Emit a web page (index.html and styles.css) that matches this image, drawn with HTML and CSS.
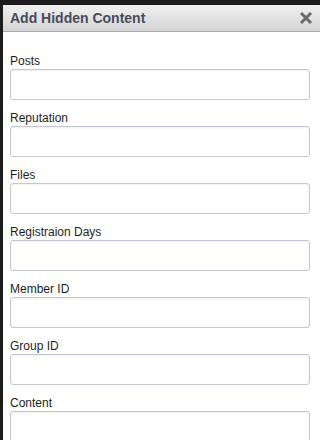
FILE: index.html
```html
<!DOCTYPE html>
<html lang="en">
<head>
    <meta charset="UTF-8">
    <title>Add Hidden Content</title>
    <link rel="stylesheet" href="styles.css">
</head>
<body>
    <div class="dialog">
        <div class="dialog-head">
            <h2>Add Hidden Content</h2>
            <svg class="close" width="12" height="12" viewBox="0 0 12 12">
                <path d="M2 2 L10 10 M10 2 L2 10" stroke="#6b6b6b" stroke-width="3" stroke-linecap="square"/>
            </svg>
        </div>
        <div class="dialog-body">
            <div class="field">
                <label for="posts">Posts</label>
                <input id="posts" type="text">
            </div>
            <div class="field">
                <label for="rep">Reputation</label>
                <input id="rep" type="text">
            </div>
            <div class="field">
                <label for="files">Files</label>
                <input id="files" type="text">
            </div>
            <div class="field">
                <label for="days">Registraion Days</label>
                <input id="days" type="text">
            </div>
            <div class="field">
                <label for="member">Member ID</label>
                <input id="member" type="text">
            </div>
            <div class="field">
                <label for="group">Group ID</label>
                <input id="group" type="text">
            </div>
            <div class="field">
                <label for="content">Content</label>
                <textarea id="content"></textarea>
            </div>
        </div>
    </div>
</body>
</html>
```

FILE: styles.css
```css
html, body {
    margin: 0;
    padding: 0;
    height: 100%;
    overflow: hidden;
}

body {
    background-color: #1c1c1c;
    font-family: 'Liberation Sans', Arial, sans-serif;
    padding: 5px 0 0 3px;
    box-sizing: border-box;
}

.dialog {
    background-color: #fff;
    width: 317px;
    height: 100%;
    overflow: hidden;
}

.dialog-head {
    display: flex;
    justify-content: space-between;
    align-items: center;
    height: 26px;
    padding: 0 8px 0 7px;
    background: linear-gradient(#f0f0f0, #d5d5d5);
    border-bottom: 1px solid #a9ada9;
}

.dialog-head h2 {
    margin: 0;
    font-size: 14px;
    font-weight: bold;
    color: #474c5b;
}

.close {
    display: block;
}

.dialog-body {
    padding: 22px 7px 0 7px;
}

.field {
    display: flex;
    flex-direction: column;
    margin-bottom: 11px;
}

.field label {
    font-size: 12px;
    line-height: 15px;
    color: #1e1e1e;
}

.field input,
.field textarea {
    width: 300px;
    height: 31px;
    box-sizing: border-box;
    border: 1px solid #c4c7d0;
    border-radius: 3px;
    box-shadow: inset 0 1px 2px rgba(0, 0, 0, 0.06);
    margin: 0;
    font-family: inherit;
}

.field textarea {
    height: 80px;
    resize: none;
}
```
